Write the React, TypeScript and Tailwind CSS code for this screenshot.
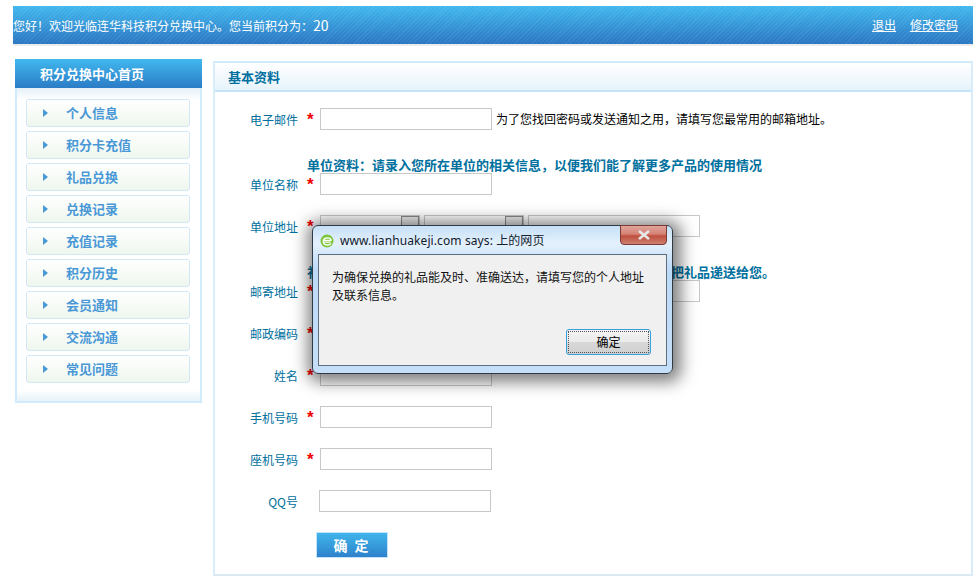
const menu = ["个人信息", "积分卡充值", "礼品兑换", "兑换记录", "充值记录", "积分历史", "会员通知", "交流沟通", "常见问题"];

function Label({ text, required = true }: { text: string; required?: boolean }) {
  return (
    <>
      <span className="w-[83px] text-right text-[12px] text-[#00709e] pt-[2px]">{text}</span>
      <span className="w-[22px] h-[22px] pl-[9px] pt-[3px] text-[17px] leading-none font-bold text-[#f00000] font-['Liberation_Sans',sans-serif]">
        {required ? "*" : ""}
      </span>
    </>
  );
}

function Field() {
  return <input className="w-[172px] h-[22px] border border-[#c8c8c8] bg-white" />;
}

function Row({ label, children }: { label: string; children?: React.ReactNode }) {
  return (
    <div className="flex items-center h-[22px] mt-5">
      <Label text={label} />
      {children ?? <Field />}
    </div>
  );
}

function FakeSelect() {
  return (
    <div className="relative w-[100px] h-[22px] border border-[#c8c8c8] bg-white flex justify-end">
      <div className="w-[18px] h-full border border-[#8a8a8a] bg-[#efefef]" />
    </div>
  );
}

export default function App() {
  return (
    <div className="relative w-[980px] h-[587px] overflow-hidden bg-white font-['Noto_Sans_CJK_SC','Noto_Sans',sans-serif] pt-[6px]">
      <header className="ml-[13px] w-[960px] h-[40px] border-b-2 border-[#ececec]">
        <div className="h-[38px] flex items-center justify-between text-white text-[12px] pr-[15px] bg-[repeating-linear-gradient(135deg,rgba(255,255,255,0.07)_0_1px,transparent_1px_3px),linear-gradient(to_bottom,#41b8ee,#2a76c2)]">
          <span className="whitespace-nowrap">
            您好！欢迎光临连华科技积分兑换中心。您当前积分为：<span className="text-[14px]">20</span>
          </span>
          <div className="flex gap-[14px]">
            <a className="underline">退出</a>
            <a className="underline">修改密码</a>
          </div>
        </div>
      </header>

      <div className="flex items-start ml-[15px] mt-[13px]">
        <aside className="w-[187px]">
          <div className="h-[29px] flex items-center pl-[25px] text-white text-[13px] font-bold bg-[linear-gradient(to_bottom,#41b8ee,#2b7cc6)]">
            积分兑换中心首页
          </div>
          <div className="h-[315px] border-2 border-t-0 border-[#d2ebfc] pt-[11px] bg-[linear-gradient(to_bottom,#e4f0f8,#ffffff_12px,#ffffff_302px,#e6f2f9)]">
            <ul className="flex flex-col gap-1 ml-[9px]">
              {menu.map((item) => (
                <li
                  key={item}
                  className="w-[164px] h-[28px] flex items-center rounded-[3px] border border-[#d2e8f7] bg-[linear-gradient(to_bottom,#ffffff,#eef7ee)] text-[13px] font-bold text-[#4a98d6]"
                >
                  <span className="ml-[16px] w-0 h-0 border-y-[4px] border-y-transparent border-l-[5px] border-l-[#4a98d6]" />
                  <span className="ml-[18px]">{item}</span>
                </li>
              ))}
            </ul>
          </div>
        </aside>

        <main className="ml-[11px] mt-[2px] w-[760px] h-[515px] border-2 border-t-[#d2ebfc] border-x-[#d8ecfa] border-b-[#dbe9f3]">
          <div className="h-[29px] flex items-center pl-[13px] text-[13px] font-bold text-[#00709e] border-b-2 border-[#c6e5fa] bg-[linear-gradient(to_bottom,#ffffff,#e6f3fb)]">
            基本资料
          </div>

          <div className="pt-4">
            <div className="flex items-center h-[22px]">
              <Label text="电子邮件" />
              <Field />
              <span className="ml-1 text-[12px] text-black whitespace-nowrap">为了您找回密码或发送通知之用，请填写您最常用的邮箱地址。</span>
            </div>

            <h3 className="mt-7 ml-[92px] h-[14px] leading-[14px] text-[13px] font-bold text-[#00709e] whitespace-nowrap">
              单位资料：请录入您所在单位的相关信息，以便我们能了解更多产品的使用情况
            </h3>
            <div className="flex items-center h-[22px] mt-[1px]">
              <Label text="单位名称" />
              <Field />
            </div>
            <Row label="单位地址">
              <div className="flex gap-1">
                <FakeSelect />
                <FakeSelect />
                <input className="w-[172px] h-[22px] border border-[#c8c8c8] bg-white" />
              </div>
            </Row>

            <h3 className="mt-7 ml-[92px] h-[14px] leading-[14px] text-[13px] font-bold text-[#00709e] whitespace-nowrap">
              礼品邮寄：请录入您的个人地址及联系信息，以便我们能及时地把礼品递送给您。
            </h3>
            <div className="flex items-center h-[22px] mt-[1px]">
              <Label text="邮寄地址" />
              <input className="w-[380px] h-[22px] border border-[#c8c8c8] bg-white" />
            </div>
            <Row label="邮政编码" />
            <Row label="姓名" />
            <Row label="手机号码" />
            <Row label="座机号码" />
            <div className="flex items-center h-[22px] mt-5">
              <span className="w-[83px] text-right text-[12px] text-[#00709e] pt-[2px]">QQ号</span>
              <div className="w-[21px]" />
              <Field />
            </div>
            <button className="block mt-5 ml-[101px] w-[72px] h-[26px] border border-[#c5e4f9] bg-[linear-gradient(to_bottom,#40b5ec,#2d82cb)] text-white text-[14px] font-bold tracking-[2px]">
              确 定
            </button>
          </div>
        </main>
      </div>

      {/* alert over the form */}
      <div className="absolute left-[312px] top-[225px] w-[361px] h-[149px] rounded-[6px] border border-[#2e3a46] shadow-[2px_2px_16px_6px_rgba(0,0,0,0.5)] bg-[linear-gradient(to_bottom,#c6e0f7,#e4f1fc_12%,#bcd9f6_30%,#c6dff8)] flex flex-col px-[5px] pb-[7px]">
        <div className="relative h-[28px] shrink-0 flex items-center pl-[2px] pt-[2px] text-[12px] tracking-[0.1px] text-[#10202e] font-['Noto_Sans','Noto_Sans_CJK_SC',sans-serif] whitespace-nowrap">
          <svg width="14" height="14" viewBox="0 0 14 14" className="mr-[6px]">
            <circle cx="7" cy="7" r="6.5" fill="#7cc63a" />
            <path d="M11.6 6.4H3M3 8.2h7.6" stroke="#ffffff" strokeWidth="1.2" />
            <path d="M3.2 7.6C3 3.6 10 2.4 11.4 6.4M3.2 7.8c.6 3.6 6 4.2 7.8 1.6" stroke="#ffffff" strokeWidth="1.3" fill="none" />
          </svg>
          www.lianhuakeji.com says: 上的网页
          <div className="absolute right-0 -top-px w-[47px] h-[20px] rounded-b-[4px] border border-[#7b3a34] bg-[linear-gradient(to_bottom,#e0a49b,#d58174_45%,#bf4f3d_55%,#cf8071)] flex items-center justify-center">
            <svg width="14" height="10" viewBox="0 0 14 10">
              <path d="M2 1l10 8M12 1L2 9" stroke="#e8e8e8" strokeWidth="2.6" />
            </svg>
          </div>
        </div>
        <div className="flex-1 relative border border-[#5c6f80] bg-[#f0f0f0] pt-[13px] px-[13px] text-[12px] leading-[18px] text-[#111]">
          <p>为确保兑换的礼品能及时、准确送达，请填写您的个人地址及联系信息。</p>
          <button className="absolute right-[15px] bottom-[10px] w-[85px] h-[26px] rounded-[3px] border border-[#3aa0dc] bg-[linear-gradient(to_bottom,#f3f3f3,#ebebeb_50%,#d8d8d8_52%,#cfcfcf)] text-[12px] text-black">
            <span className="absolute inset-[1px] border border-dotted border-[#555]" />
            确定
          </button>
        </div>
      </div>
    </div>
  );
}
